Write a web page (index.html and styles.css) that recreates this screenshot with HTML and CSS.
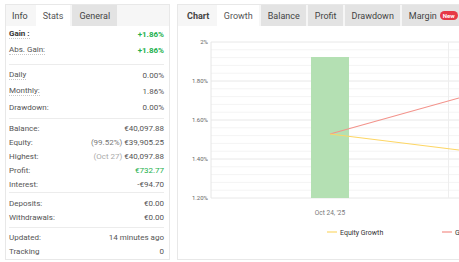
FILE: index.html
```html
<!DOCTYPE html>
<html lang="en">
<head>
  <meta charset="UTF-8">
  <title>Account stats</title>
  <link rel="stylesheet" href="styles.css">
</head>
<body>

  <!-- Stats card -->
  <div class="card stats">
    <div class="tabs">
      <div class="tab title">Info</div>
      <div class="tab active">Stats</div>
      <div class="tab">General</div>
    </div>

    <div class="group g1">
      <div class="row"><span class="label dot strong">Gain :</span><span class="val up">+1.86%</span></div>
      <div class="row"><span class="label dot">Abs. Gain:</span><span class="val up">+1.86%</span></div>
    </div>
    <div class="group g2">
      <div class="row"><span class="label dot">Daily</span><span class="val">0.00%</span></div>
      <div class="row"><span class="label dot">Monthly:</span><span class="val">1.86%</span></div>
      <div class="row"><span class="label">Drawdown:</span><span class="val">0.00%</span></div>
    </div>
    <div class="group g3">
      <div class="row"><span class="label">Balance:</span><span class="val">€40,097.88</span></div>
      <div class="row"><span class="label">Equity:</span><span class="val"><span class="muted">(99.52%)</span> €39,905.25</span></div>
      <div class="row"><span class="label">Highest:</span><span class="val"><span class="muted light">(Oct 27)</span> €40,097.88</span></div>
      <div class="row"><span class="label">Profit:</span><span class="val up thin">€732.77</span></div>
      <div class="row"><span class="label">Interest:</span><span class="val">-€94.70</span></div>
    </div>
    <div class="group g4">
      <div class="row"><span class="label">Deposits:</span><span class="val">€0.00</span></div>
      <div class="row"><span class="label">Withdrawals:</span><span class="val">€0.00</span></div>
    </div>
    <div class="group g5">
      <div class="row"><span class="label">Updated:</span><span class="val">14 minutes ago</span></div>
      <div class="row"><span class="label">Tracking</span><span class="val">0</span></div>
    </div>
  </div>

  <!-- Chart card -->
  <div class="card chart">
    <div class="tabs">
      <div class="tab title bold">Chart</div>
      <div class="tab active">Growth</div>
      <div class="tab">Balance</div>
      <div class="tab">Profit</div>
      <div class="tab">Drawdown</div>
      <div class="tab">Margin <span class="badge">New</span></div>
    </div>

    <svg class="plot" width="281" height="233" viewBox="178 26 281 233">
      <g id="grid"></g>
      <line x1="211" y1="42" x2="211" y2="198" stroke="#e6e6e6" stroke-width="1"/>
      <line x1="448.5" y1="42" x2="448.5" y2="198" stroke="#eeeeee" stroke-width="1"/>
      <g class="ylab">
        <text x="208" y="44">2%</text>
        <text x="208" y="83">1.80%</text>
        <text x="208" y="122">1.60%</text>
        <text x="208" y="161">1.40%</text>
        <text x="208" y="200">1.20%</text>
      </g>
      <rect x="311" y="57" width="38" height="141" fill="#b4e0b3"/>
      <line x1="330" y1="134" x2="459" y2="98" stroke="#f3938b" stroke-width="1.2"/>
      <line x1="330" y1="134" x2="459" y2="150" stroke="#fdd664" stroke-width="1.2"/>
      <text class="xlab" x="330" y="214.5">Oct 24, '25</text>
      <line x1="327" y1="232" x2="337" y2="232" stroke="#fde08a" stroke-width="1.5"/>
      <text class="legend" x="340" y="234.5">Equity Growth</text>
      <line x1="442" y1="232" x2="452" y2="232" stroke="#f6a6a0" stroke-width="1.5"/>
      <text class="legend" x="455" y="234.5">Growth</text>
    </svg>
  </div>

  <script>
    // grid lines: 4 major steps, 5 minor per step
    const grid = document.getElementById('grid');
    for (let k = 0; k <= 20; k++) {
      const y = 42 + k * 7.8;
      const l = document.createElementNS('http://www.w3.org/2000/svg', 'line');
      l.setAttribute('x1', 211);
      l.setAttribute('x2', 459);
      l.setAttribute('y1', y);
      l.setAttribute('y2', y);
      l.setAttribute('stroke', k % 5 === 0 ? '#e8e8e8' : '#f4f4f4');
      l.setAttribute('stroke-width', 1);
      grid.appendChild(l);
    }
  </script>

</body>
</html>
```

FILE: styles.css
```css
body {
  margin: 0;
  padding: 4px 0 0 5px;
  font-family: Roboto, "Liberation Sans", sans-serif;
  background: white;
  display: flex;
  gap: 7px;
  overflow: hidden;
  height: 262px;
  box-sizing: border-box;
}

.card {
  border: 1px solid #e8e8e8;
  box-sizing: border-box;
  height: 256px;
  flex-shrink: 0;
}

.stats {
  width: 165px;
}

.chart {
  width: 320px;
}

/* --- tabs --- */
.tabs {
  display: flex;
  gap: 2px;
  height: 21px;
  background: #f6f6f6;
}

.tab {
  display: flex;
  align-items: center;
  padding: 0 6.5px;
  font-size: 9px;
  color: #444;
  background: #e3e3e3;
}

.stats .tab {
  padding: 0 7px;
}

.stats .tab.title {
  background: transparent;
  padding: 0 6px;
}

.tab.bold {
  background: transparent;
  font-weight: 700;
  padding: 0 6px 0 9px;
}

.tab.active {
  background: white;
  color: #555;
}

.badge {
  margin-left: 3px;
  background: #e63946;
  color: white;
  font-size: 6px;
  font-weight: 700;
  padding: 1px 3px;
  border-radius: 5px;
}

/* --- stats rows --- */
.group {
  margin: 0 5px 0 3px;
  border-top: 1px solid #ececec;
}

.group.g1 {
  border-top: none;
  padding: 0 0 6px;
}

.g1 .row, .g2 .row {
  height: 16px;
}

.g2 {
  padding: 2px 0 3px;
}

.g3 {
  padding: 2px 0 1px;
}

.g4 {
  padding: 3px 0 3px;
}

.g5 {
  padding: 2px 0 0;
}

.row {
  display: flex;
  justify-content: space-between;
  align-items: center;
  height: 14px;
  font-size: 8px;
  color: #555;
}

.label.dot {
  border-bottom: 1px dotted #c8c8c8;
  line-height: 9px;
}

.label.strong {
  font-weight: 700;
  color: #333;
}

.val.up {
  color: #23b14d;
  font-weight: 700;
}

.val.up.thin {
  font-weight: 400;
}

.muted {
  color: #777;
}

.muted.light {
  color: #aaa;
}

/* --- chart --- */
.plot {
  display: block;
}

.ylab text {
  font-size: 6px;
  fill: #666;
  text-anchor: end;
}

.xlab {
  font-size: 6.5px;
  fill: #777;
  text-anchor: middle;
}

.legend {
  font-size: 7px;
  fill: #333;
}
```
